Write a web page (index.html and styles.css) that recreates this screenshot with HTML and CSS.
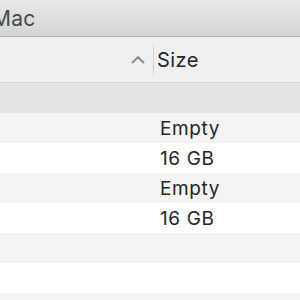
FILE: index.html
```html
<!DOCTYPE html>
<html lang="en">
<head>
  <meta charset="UTF-8">
  <title>Mac</title>
  <link rel="stylesheet" href="styles.css">
</head>
<body>
  <div class="window">
    <div class="titlebar">Mac</div>

    <div class="list-header">
      <div class="col-name">
        <svg class="sort-icon" width="14" height="8" viewBox="0 0 14 8">
          <polyline points="1,7 7,1.2 13,7" fill="none" stroke="#8c8c8c" stroke-width="2"/>
        </svg>
      </div>
      <div class="col-size">Size</div>
    </div>

    <div class="list">
      <div class="row row-group"><div></div><div class="cell-size"></div></div>
      <div class="row row-odd"><div></div><div class="cell-size">Empty</div></div>
      <div class="row"><div></div><div class="cell-size">16 GB</div></div>
      <div class="row row-odd"><div></div><div class="cell-size">Empty</div></div>
      <div class="row"><div></div><div class="cell-size">16 GB</div></div>
      <div class="row row-odd"><div></div><div class="cell-size"></div></div>
      <div class="row"><div></div><div class="cell-size"></div></div>
      <div class="row row-odd"><div></div><div class="cell-size"></div></div>
    </div>
  </div>
</body>
</html>
```

FILE: styles.css
```css
body {
  margin: 0;
  font-family: Inter, 'Liberation Sans', sans-serif;
  color: #262626;
  background-color: #fff;
}

.window {
  width: 300px;
  height: 300px;
  overflow: hidden;
}

.titlebar {
  height: 36px;
  line-height: 37px;
  font-size: 21px;
  letter-spacing: 0.3px;
  color: #4a4a4a;
  text-indent: -8px;
  background: linear-gradient(#e8e8e8, #d4d4d4);
  border-bottom: 1px solid #b3b3b3;
}

.list-header {
  display: grid;
  grid-template-columns: 153px 1fr;
  align-items: center;
  height: 45px;
  background-color: #f0f0f0;
  border-bottom: 1px solid #d6d6d6;
}

.col-name {
  display: flex;
  justify-content: flex-end;
  padding-right: 8px;
}

.sort-icon {
  display: block;
}

.col-size {
  height: 30px;
  line-height: 31px;
  padding-left: 3px;
  font-size: 20px;
  letter-spacing: 0.4px;
  border-left: 1px solid #d0d0d0;
}

.row {
  display: grid;
  grid-template-columns: 153px 1fr;
  height: 30px;
  background-color: #fff;
}

.row-odd {
  background-color: #f4f4f4;
}

.row-group {
  background-color: #e4e4e4;
}

.cell-size {
  padding: 2px 0 0 7px;
  line-height: 28px;
  font-size: 19px;
  letter-spacing: 0.6px;
}
```
